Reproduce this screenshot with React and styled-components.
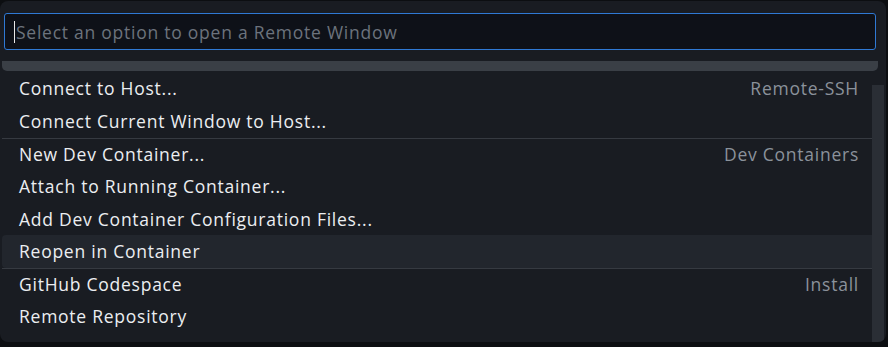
import React from 'react';
import styled, { createGlobalStyle } from 'styled-components';

const GlobalStyle = createGlobalStyle`
  html, body {
    margin: 0;
    padding: 0;
    background: #0c0e11;
    width: 888px;
    height: 347px;
    overflow: hidden;
  }
  #root {
    font-family: "Open Sans", "Noto Sans", sans-serif;
  }
`;

const Panel = styled.div`
  position: relative;
  margin-top: 1px;
  width: 886px;
  height: 341px;
  background: #191c22;
  border-radius: 8px;
  box-sizing: border-box;
  padding: 12px 0 0 0;
  overflow: hidden;
`;

const InputBox = styled.div`
  margin: 0 10px 0 4px;
  height: 37px;
  box-sizing: border-box;
  border: 1px solid #2f79d4;
  border-radius: 3px;
  background: #0e1118;
  display: flex;
  align-items: center;
  padding-left: 9px;
  color: #6c737d;
  font-size: 17.5px;
  letter-spacing: 0.75px;
`;

const Caret = styled.span`
  width: 1px;
  height: 22px;
  background: #e8e8e8;
  margin-right: 1px;
`;

const Progress = styled.div`
  margin: 11px 8px 0 2px;
  height: 10px;
  background: #3a3f46;
  border-radius: 0 0 5px 5px;
`;

const List = styled.div`
  display: flex;
  flex-direction: column;
  padding: 1.5px 8px 0 2px;
`;

const Row = styled.div`
  display: flex;
  align-items: center;
  justify-content: space-between;
  height: 32.6px;
  box-sizing: border-box;
  padding: 0 19px 1px 17px;
  border-top: ${p => (p.$sep ? '1px solid #363a41' : 'none')};
  background: ${p => (p.$active ? '#22262d' : 'transparent')};
  border-radius: ${p => (p.$active ? '4px' : '0')};
  font-size: 17.5px;
  letter-spacing: 0.75px;
`;

const Label = styled.span`
  color: #eceef1;
`;

const Hint = styled.span`
  color: #8b929b;
`;

const Scrollbar = styled.div`
  position: absolute;
  right: 2px;
  top: 84px;
  bottom: 0;
  width: 12px;
  background: #2a2e35;
`;

const items = [
  { label: 'Connect to Host...', hint: 'Remote-SSH' },
  { label: 'Connect Current Window to Host...' },
  { label: 'New Dev Container...', hint: 'Dev Containers', sep: true },
  { label: 'Attach to Running Container...' },
  { label: 'Add Dev Container Configuration Files...' },
  { label: 'Reopen in Container', active: true },
  { label: 'GitHub Codespace', hint: 'Install', sep: true },
  { label: 'Remote Repository' },
];

export default function App() {
  return (
    <>
      <GlobalStyle />
      <Panel>
        <InputBox>
          <Caret />
          Select an option to open a Remote Window
        </InputBox>
        <Progress />
        <List>
          {items.map(it => (
            <Row key={it.label} $sep={it.sep} $active={it.active}>
              <Label>{it.label}</Label>
              {it.hint && <Hint>{it.hint}</Hint>}
            </Row>
          ))}
        </List>
        <Scrollbar />
      </Panel>
    </>
  );
}
